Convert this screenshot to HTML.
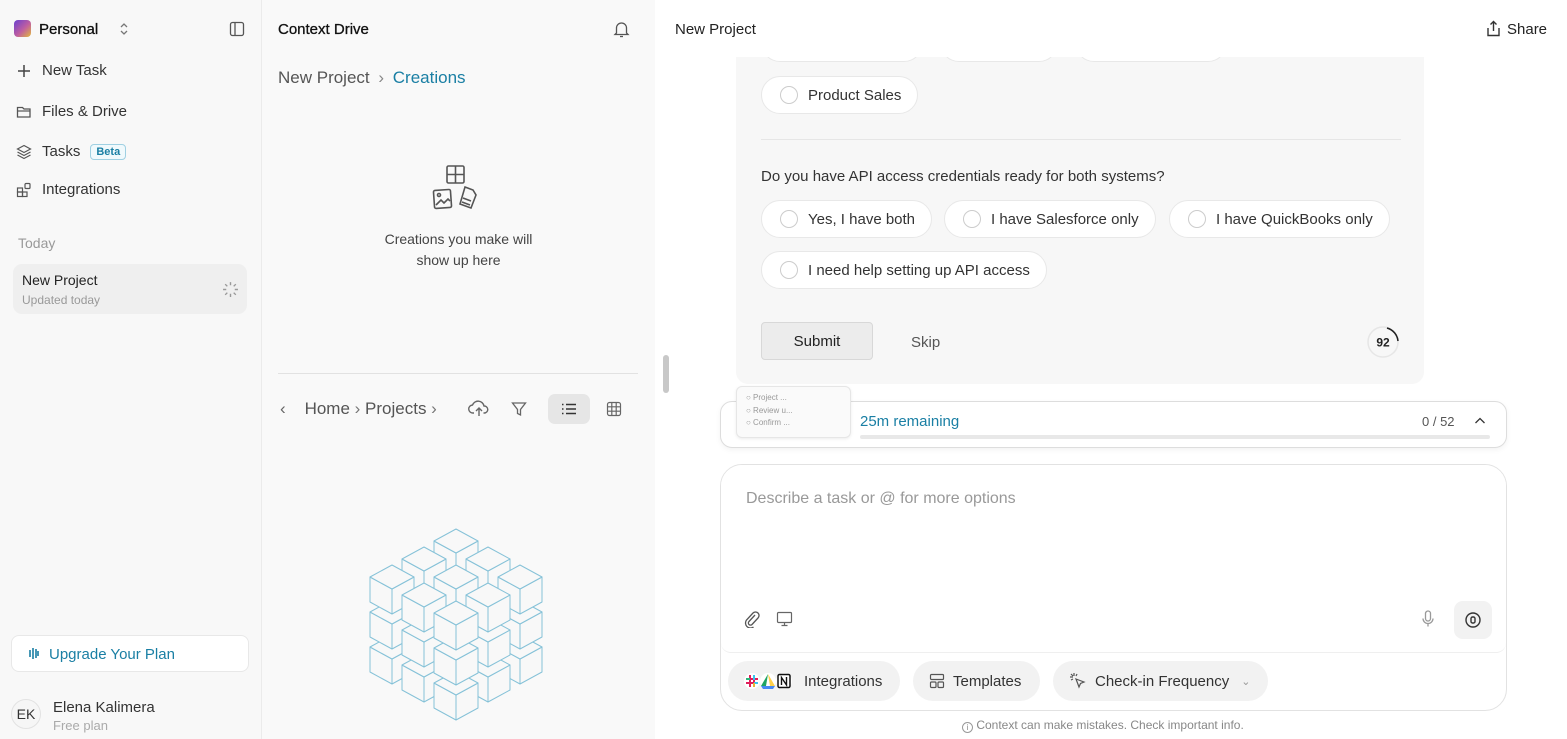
<!DOCTYPE html>
<html><head><meta charset="utf-8"><style>
*{box-sizing:border-box;margin:0;padding:0}
body{width:1567px;height:739px;overflow:hidden;font-family:"Liberation Sans",sans-serif;color:#222;background:#fff;position:relative}
.abs{position:absolute;white-space:nowrap}
.side{left:0;top:0;width:262px;height:739px;background:#f8f8f8;border-right:1px solid #ebebeb}
.mid{left:262px;top:0;width:393px;height:739px;background:#f9f9f9}
.nav{position:absolute;left:16px;font-size:15px;color:#333;display:flex;align-items:center;gap:10px}
svg{display:block}
.opt{position:absolute;height:38px;border:1px solid #e8e8e8;border-radius:19px;background:#fff;font-size:15px;color:#333;display:flex;align-items:center;padding:0 16px 0 18px;gap:10px;white-space:nowrap}
.opt i{width:18px;height:18px;border:1px solid #ccc;border-radius:50%;display:block}
.chip{position:absolute;top:661px;height:40px;border-radius:20px;background:#f2f2f2;display:flex;align-items:center;gap:8px;padding:0 16px;font-size:15px;color:#333;white-space:nowrap}
</style></head><body>
<div class="abs side"></div>
<div class="abs mid"></div>
<!-- sidebar -->
<div class="abs" style="left:14px;top:20px;width:17px;height:17px;border-radius:4px;background:linear-gradient(135deg,#6a3fd0,#c05fa0 55%,#e2b93b)"></div>
<div class="abs" style="left:39px;top:21px;font-size:15px;color:#111;-webkit-text-stroke:.3px #111">Personal</div>
<svg class="abs" style="left:118px;top:21px" width="12" height="16" viewBox="0 0 12 16"><path d="M3 6l3-3 3 3M3 10l3 3 3-3" fill="none" stroke="#777" stroke-width="1.3"/></svg>
<svg class="abs" style="left:229px;top:21px" width="16" height="16" viewBox="0 0 16 16"><rect x="1.5" y="1.5" width="13" height="13" rx="2" fill="none" stroke="#555" stroke-width="1.3"/><path d="M6 1.5v13" stroke="#555" stroke-width="1.3"/></svg>
<div class="nav" style="top:62px"><svg width="16" height="16"><path d="M8 2v12M2 8h12" stroke="#444" stroke-width="1.5"/></svg>New Task</div>
<div class="nav" style="top:103px"><svg width="16" height="16"><path d="M1.5 3.5h5l1.5 1.5h6v8h-12.5z" fill="none" stroke="#555" stroke-width="1.3"/><path d="M1.5 7h13" stroke="#555" stroke-width="1.2"/></svg>Files &amp; Drive</div>
<div class="nav" style="top:143px"><svg width="16" height="16"><path d="M8 1.5l6.5 3.5L8 8.5 1.5 5zM1.5 8L8 11.5 14.5 8M1.5 11L8 14.5 14.5 11" fill="none" stroke="#555" stroke-width="1.2"/></svg>Tasks<span style="font-size:11px;font-weight:bold;color:#1a7fa4;border:1px solid #9fd0e2;background:#f0f9fc;border-radius:4px;padding:1px 5px;margin-left:0">Beta</span></div>
<div class="nav" style="top:181px"><svg width="16" height="16"><rect x="1.5" y="6" width="5" height="4" fill="none" stroke="#555" stroke-width="1.2"/><rect x="1.5" y="10" width="5" height="4.5" fill="none" stroke="#555" stroke-width="1.2"/><rect x="6.5" y="10" width="4.5" height="4.5" fill="none" stroke="#555" stroke-width="1.2"/><rect x="9" y="1.5" width="5" height="5" rx="1" fill="none" stroke="#555" stroke-width="1.2"/></svg>Integrations</div>
<div class="abs" style="left:18px;top:235px;font-size:14px;color:#999">Today</div>
<div class="abs" style="left:13px;top:264px;width:234px;height:50px;border-radius:9px;background:#efefef"></div>
<div class="abs" style="left:22px;top:272px;font-size:14px;color:#222">New Project</div>
<div class="abs" style="left:22px;top:293px;font-size:12px;color:#999">Updated today</div>
<svg class="abs" style="left:222px;top:281px" width="17" height="17" viewBox="0 0 16 16" stroke="#999" stroke-width="1.3"><path d="M8 1v3M8 12v3M1 8h3M12 8h3M3 3l2 2M11 11l2 2M3 13l2-2M11 5l2-2"/></svg>
<div class="abs" style="left:11px;top:635px;width:238px;height:37px;border:1px solid #e8e8e8;border-radius:8px;background:#fff"></div>
<svg class="abs" style="left:28px;top:647px" width="12" height="13"><path d="M2 3v7M5 1v11M8 2v9M10 4v5" stroke="#1a7fa4" stroke-width="1.6"/></svg>
<div class="abs" style="left:49px;top:646px;font-size:15px;color:#1a7fa4">Upgrade Your Plan</div>
<div class="abs" style="left:11px;top:699px;width:30px;height:30px;border:1px solid #e2e2e2;border-radius:50%;background:#f6f6f6;font-size:14px;color:#333;text-align:center;line-height:28px">EK</div>
<div class="abs" style="left:53px;top:699px;font-size:15px;color:#333">Elena Kalimera</div>
<div class="abs" style="left:53px;top:718px;font-size:13px;color:#aaa">Free plan</div>
<!-- middle -->
<div class="abs" style="left:278px;top:21px;font-size:15px;color:#111;-webkit-text-stroke:.3px #111">Context Drive</div>
<svg class="abs" style="left:613px;top:20px" width="17" height="18" viewBox="0 0 17 18"><path d="M3.5 13V8a5 5 0 0110 0v5l1.5 1.5H2z" fill="none" stroke="#555" stroke-width="1.3"/><path d="M7 16.5h3" stroke="#555" stroke-width="1.3"/></svg>
<div class="abs" style="left:278px;top:68px;font-size:17px;color:#555">New Project <span style="color:#888;margin:0 4px">›</span> <span style="color:#1a7fa4">Creations</span></div>
<svg class="abs" style="left:432px;top:165px" width="50" height="46" viewBox="0 0 50 46" fill="none" stroke="#555" stroke-width="1.6"><rect x="15" y="1" width="17" height="17" rx="1.5"/><path d="M23.5 1v17M15 9.5h17"/><rect x="2" y="25" width="17" height="18" rx="1.5" transform="rotate(-4 10 34)"/><circle cx="7" cy="30" r="1.5"/><path d="M4 40l5-5 3 3 4-4 2 2"/><path d="M33 22l8 3 3 5-5 13-11-4z"/><path d="M31 33l8 3M30 37l8 3"/></svg>
<div class="abs" style="left:262px;top:229px;width:393px;text-align:center;font-size:14px;line-height:21px;color:#444">Creations you make will<br>show up here</div>
<div class="abs" style="left:278px;top:373px;width:360px;height:1px;background:#e2e2e2"></div>
<div class="abs" style="left:280px;top:399px;font-size:17px;color:#555"><span style="color:#666">‹</span>&nbsp;&nbsp;&nbsp; Home <span style="color:#777">›</span> Projects <span style="color:#777">›</span></div>
<svg class="abs" style="left:468px;top:398px" width="22" height="20" viewBox="0 0 22 20" fill="none" stroke="#666" stroke-width="1.4"><path d="M6 15H5a4 4 0 01-.5-8 6 6 0 0111.5 1 3.5 3.5 0 01.5 7h-1"/><path d="M11 18v-8M8 13l3-3 3 3"/></svg>
<svg class="abs" style="left:511px;top:401px" width="16" height="16" viewBox="0 0 16 16"><path d="M1.5 2h13L9.5 8.5V14l-3-1.5v-4z" fill="none" stroke="#666" stroke-width="1.3"/></svg>
<div class="abs" style="left:548px;top:394px;width:42px;height:30px;border-radius:7px;background:#e6e6e6"></div>
<svg class="abs" style="left:561px;top:403px" width="16" height="12"><path d="M1 1.5h1.5M1 6h1.5M1 10.5h1.5M5 1.5h10M5 6h10M5 10.5h10" stroke="#333" stroke-width="1.5"/></svg>
<svg class="abs" style="left:606px;top:401px" width="16" height="16" viewBox="0 0 16 16" fill="none" stroke="#666" stroke-width="1.2"><rect x="1.5" y="1.5" width="13" height="13" rx="2"/><path d="M5.8 1.5v13M10.2 1.5v13M1.5 5.8h13M1.5 10.2h13"/></svg>
<svg class="abs" style="left:0;top:0" width="655" height="739">
<defs><g id="c" fill="#f8f8f8" stroke="#86c2d8" stroke-width="1" stroke-linejoin="round"><polygon points="-22,12 0,24 0,49 -22,37"/><polygon points="0,24 22,12 22,37 0,49"/><polygon points="0,0 22,12 0,24 -22,12"/></g></defs>
<use href="#c" x="456" y="599"/>
<use href="#c" x="488" y="617"/><use href="#c" x="424" y="617"/><use href="#c" x="456" y="564"/>
<use href="#c" x="520" y="635"/><use href="#c" x="456" y="635"/><use href="#c" x="392" y="635"/><use href="#c" x="488" y="582"/><use href="#c" x="424" y="582"/><use href="#c" x="456" y="529"/>
<use href="#c" x="488" y="653"/><use href="#c" x="424" y="653"/><use href="#c" x="520" y="600"/><use href="#c" x="456" y="600"/><use href="#c" x="392" y="600"/><use href="#c" x="488" y="547"/><use href="#c" x="424" y="547"/>
<use href="#c" x="456" y="671"/><use href="#c" x="488" y="618"/><use href="#c" x="424" y="618"/><use href="#c" x="520" y="565"/><use href="#c" x="456" y="565"/><use href="#c" x="392" y="565"/>
<use href="#c" x="456" y="636"/><use href="#c" x="488" y="583"/><use href="#c" x="424" y="583"/>
<use href="#c" x="456" y="601"/>
</svg>
<div class="abs" style="left:663px;top:355px;width:6px;height:38px;border-radius:3px;background:#c8c8c8"></div>
<!-- right -->
<div class="abs" style="left:736px;top:30px;width:688px;height:354px;border-radius:12px;background:#f7f7f7"></div>
<div class="opt" style="left:761px;top:24px;width:162px"></div>
<div class="opt" style="left:940px;top:24px;width:118px"></div>
<div class="opt" style="left:1075px;top:24px;width:152px"></div>
<div class="abs" style="left:655px;top:0;width:912px;height:57px;background:#fff"></div>
<div class="abs" style="left:675px;top:21px;font-size:15px;color:#222">New Project</div>
<svg class="abs" style="left:1486px;top:20px" width="15" height="17" viewBox="0 0 15 17" fill="none" stroke="#333" stroke-width="1.4"><path d="M7.5 11V1.5M4.5 4.5l3-3 3 3M2 8v7.5h11V8"/></svg>
<div class="abs" style="left:1507px;top:21px;font-size:15px;color:#222">Share</div>
<div class="opt" style="left:761px;top:76px"><i></i>Product Sales</div>
<div class="abs" style="left:761px;top:139px;width:640px;height:1px;background:#e6e6e6"></div>
<div class="abs" style="left:761px;top:168px;font-size:15px;color:#333">Do you have API access credentials ready for both systems?</div>
<div class="opt" style="left:761px;top:200px"><i></i>Yes, I have both</div>
<div class="opt" style="left:944px;top:200px"><i></i>I have Salesforce only</div>
<div class="opt" style="left:1169px;top:200px"><i></i>I have QuickBooks only</div>
<div class="opt" style="left:761px;top:251px"><i></i>I need help setting up API access</div>
<div class="abs" style="left:761px;top:322px;width:112px;height:38px;border:1px solid #d8d8d8;border-radius:4px;background:#ececec;font-size:15px;text-align:center;line-height:38px;color:#222">Submit</div>
<div class="abs" style="left:911px;top:334px;font-size:15px;color:#555">Skip</div>
<svg class="abs" style="left:1367px;top:325px" width="34" height="34" viewBox="0 0 34 34"><circle cx="16" cy="17" r="15" fill="#f7f7f7" stroke="#e6e6e6" stroke-width="1.5"/><path d="M20 3a15 15 0 0111 13" fill="none" stroke="#222" stroke-width="1.6"/><text x="16" y="21.5" font-size="12" font-weight="bold" text-anchor="middle" font-family="Liberation Sans" fill="#222">92</text></svg>
<div class="abs" style="left:720px;top:401px;width:787px;height:47px;border:1px solid #ddd;border-radius:12px;background:#fff;box-shadow:0 2px 6px rgba(0,0,0,.05)"></div>
<div class="abs" style="left:736px;top:386px;width:115px;height:52px;border:1px solid #e6e6e6;border-radius:6px;background:#fafafa;box-shadow:0 1px 3px rgba(0,0,0,.08);font-size:8px;color:#999;line-height:12.5px;padding:5px 0 0 9px">○ Project ...<br>○ Review u...<br>○ Confirm ...</div>
<div class="abs" style="left:860px;top:413px;font-size:15px;color:#1a7fa4">25m remaining</div>
<div class="abs" style="left:860px;top:435px;width:630px;height:4px;border-radius:2px;background:#e8e8e8"></div>
<div class="abs" style="left:1422px;top:414px;font-size:13px;color:#555">0 / 52</div>
<svg class="abs" style="left:1474px;top:416px" width="12" height="9"><path d="M1.5 7l4.5-4.5L10.5 7" fill="none" stroke="#333" stroke-width="1.3"/></svg>
<div class="abs" style="left:720px;top:464px;width:787px;height:247px;border:1px solid #e2e2e2;border-radius:22px;background:#fff"></div>
<div class="abs" style="left:721px;top:465px;width:785px;height:188px;border-bottom:1px solid #efefef;border-radius:21px 21px 10px 10px;background:#fff"></div>
<div class="abs" style="left:746px;top:490px;font-size:16px;color:#999">Describe a task or @ for more options</div>
<svg class="abs" style="left:743px;top:610px" width="18" height="18" viewBox="0 0 18 18"><path d="M12 5l-6 6.5a2 2 0 003 3L15 8a3.5 3.5 0 00-5-5l-6.5 7a5 5 0 007 7" fill="none" stroke="#555" stroke-width="1.3"/></svg>
<svg class="abs" style="left:776px;top:611px" width="17" height="16" viewBox="0 0 17 16" fill="none" stroke="#666" stroke-width="1.2"><rect x="1.5" y="1.5" width="14" height="10" rx="1"/><path d="M8.5 11.5v3M5.5 14.5h6"/></svg>
<svg class="abs" style="left:1421px;top:610px" width="14" height="18" viewBox="0 0 14 18" fill="none" stroke="#999" stroke-width="1.3"><rect x="4.5" y="1" width="5" height="10" rx="2.5"/><path d="M2 8.5a5 5 0 0010 0M7 13.5v3"/></svg>
<div class="abs" style="left:1454px;top:601px;width:38px;height:38px;border-radius:9px;background:#f2f2f2"></div>
<svg class="abs" style="left:1464px;top:611px" width="18" height="18" viewBox="0 0 18 18" fill="none" stroke="#333" stroke-width="1.4"><circle cx="9" cy="9" r="7"/><rect x="7" y="6" width="4" height="6" rx="1.5"/></svg>
<div class="chip" style="left:728px;width:172px"><svg width="52" height="18" viewBox="0 0 52 18"><circle cx="8" cy="9" r="8" fill="#fff"/><path d="M6 3v12M10 3v12M2 7h12M2 11h12" stroke="#e01e5a" stroke-width="2"/><path d="M10 3v5M10 11h4" stroke="#36c5f0" stroke-width="2"/><path d="M2 7h4" stroke="#2eb67d" stroke-width="2"/><path d="M10 11v4" stroke="#ecb22e" stroke-width="2"/><circle cx="24" cy="9" r="8" fill="#fff"/><path d="M24 2l-7 12h5z" fill="#1fa463"/><path d="M24 2l7 12h-5z" fill="#ffd04b"/><path d="M17 14h14l-2 3H19z" fill="#4688f4"/><circle cx="40" cy="9" r="8" fill="#fff"/><rect x="34" y="2.5" width="12" height="13" rx="1.5" fill="#fff" stroke="#111" stroke-width="1.5"/><path d="M37.5 13V5.5l5 7.5V5" fill="none" stroke="#111" stroke-width="1.4"/></svg>Integrations</div>
<div class="chip" style="left:913px;width:127px"><svg width="16" height="16" viewBox="0 0 16 16" fill="none" stroke="#555" stroke-width="1.2"><rect x="1.5" y="1.5" width="13" height="5" rx="1"/><rect x="1.5" y="9" width="5.5" height="5.5" rx="1"/><rect x="9" y="9" width="5.5" height="5.5" rx="1"/></svg>Templates</div>
<div class="chip" style="left:1053px;padding-right:18px"><svg width="18" height="18" viewBox="0 0 18 18" fill="none" stroke="#555" stroke-width="1.2"><path d="M7 7l8 3-3.5 1.5L10 15z"/><path d="M5 1v3M1 5h3M2 2l2 2M8 2L7 4M2 8l2-1"/></svg>Check-in Frequency<span style="color:#999;font-size:11px;margin-left:4px">⌄</span></div>
<div class="abs" style="left:962px;top:718px;font-size:12px;color:#888"><span style="display:inline-block;width:11px;height:11px;border:1px solid #999;border-radius:50%;font-size:8px;line-height:10px;text-align:center;vertical-align:-1px">i</span> Context can make mistakes. Check important info.</div>
</body></html>
